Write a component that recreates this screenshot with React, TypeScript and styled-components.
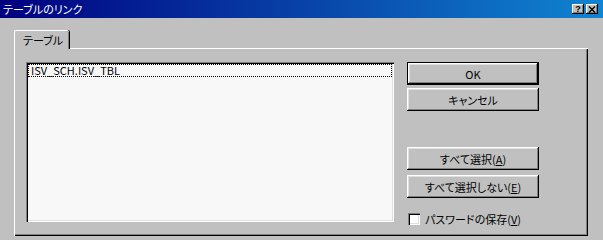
import styled, { createGlobalStyle } from "styled-components";

const GlobalStyle = createGlobalStyle`
  html, body {
    margin: 0;
    padding: 0;
    background: #c0c0c0;
  }
  body {
    font-family: "Noto Sans CJK JP", "Noto Sans", sans-serif;
  }
`;

const Window = styled.div`
  width: 603px;
  height: 240px;
  background: #c0c0c0;
  display: flex;
  flex-direction: column;
  overflow: hidden;
  font-size: 11px;
  font-weight: normal;
  color: #000;
  font-feature-settings: "palt";
`;

const TitleBar = styled.div`
  height: 18px;
  flex: none;
  display: flex;
  align-items: center;
  justify-content: space-between;
  padding: 0 5px 0 3px;
  background: linear-gradient(to right, #000080, #1084d0);
  color: #fff;
`;

const TitleText = styled.span`
  line-height: 18px;
  font-size: 11px;
`;

const CaptionButtons = styled.div`
  display: flex;
  gap: 2px;
`;

const CaptionButton = styled.div`
  width: 12px;
  height: 10px;
  background: #c0c0c0;
  box-shadow: inset -1px -1px #000, inset 1px 1px #fff, inset -2px -2px #808080;
  display: flex;
  align-items: center;
  justify-content: center;
  color: #000;
  font-family: "Liberation Sans", sans-serif;
  font-weight: bold;
  font-size: 9px;
  line-height: 10px;
`;

const Body = styled.div`
  flex: 1;
  display: flex;
  flex-direction: column;
  padding: 12px 15px 0 14px;
`;

const TabStrip = styled.div`
  display: flex;
  height: 18px;
  flex: none;
`;

const Tab = styled.div`
  position: relative;
  z-index: 1;
  width: 55px;
  height: 19px;
  box-sizing: border-box;
  padding: 2px 0 0 8px;
  background: #c0c0c0;
  border-top: 1px solid #fff;
  border-left: 1px solid #fff;
  border-top-left-radius: 2px;
  border-top-right-radius: 2px;
  box-shadow: inset -1px 0 #808080, 1px 0 #000;
  line-height: 15px;
`;

const Panel = styled.div`
  width: 574px;
  height: 188px;
  flex: none;
  box-sizing: border-box;
  padding: 14px 0 0 12px;
  display: flex;
  gap: 13px;
  box-shadow: inset 1px 1px #fff, inset -1px -1px #000, inset -2px -2px #808080;
`;

const ListBox = styled.div`
  width: 368px;
  height: 160px;
  box-sizing: border-box;
  padding: 1px 2px;
  background: #f8f8f8;
  box-shadow: inset 1px 1px #808080, inset 2px 2px #000, inset -1px -1px #fff,
    inset -2px -2px #dfdfdf;
`;

const ListItem = styled.div`
  height: 13px;
  margin: 1px 0 0;
  padding-left: 3px;
  outline: 1px dotted #000;
  outline-offset: -1px;
  line-height: 13px;
`;

const ButtonColumn = styled.div`
  width: 132px;
  display: flex;
  flex-direction: column;
`;

const Button = styled.div<{ $default?: boolean; $gap?: number }>`
  height: 23px;
  box-sizing: border-box;
  margin-top: ${(p) => p.$gap ?? 0}px;
  background: #c0c0c0;
  display: flex;
  align-items: center;
  justify-content: center;
  line-height: 14px;
  border: ${(p) => (p.$default ? "1px solid #000" : "none")};
  box-shadow: inset -1px -1px #000, inset 1px 1px #fff, inset -2px -2px #808080,
    inset 2px 2px #dfdfdf;
`;

const Mnemonic = styled.span`
  text-decoration: underline;
`;

const CheckRow = styled.label`
  display: flex;
  align-items: center;
  gap: 5px;
  margin-top: 14px;
  padding-left: 1px;
  line-height: 14px;
`;

const CheckBox = styled.span`
  width: 12px;
  height: 12px;
  background: #fff;
  box-shadow: inset 1px 1px #808080, inset 2px 2px #000, inset -1px -1px #fff,
    inset -2px -2px #dfdfdf;
`;

const App = () => {
  return (
    <Window>
      <GlobalStyle />
      <TitleBar>
        <TitleText>テーブルのリンク</TitleText>
        <CaptionButtons>
          <CaptionButton>?</CaptionButton>
          <CaptionButton>
            <svg width="8" height="7" viewBox="0 0 8 7">
              <path d="M1 0.5 L7 6.5 M7 0.5 L1 6.5" stroke="#000" strokeWidth="1.4" />
            </svg>
          </CaptionButton>
        </CaptionButtons>
      </TitleBar>
      <Body>
        <TabStrip>
          <Tab>テーブル</Tab>
        </TabStrip>
        <Panel>
          <ListBox>
            <ListItem>ISV_SCH.ISV_TBL</ListItem>
          </ListBox>
          <ButtonColumn>
            <Button $default>OK</Button>
            <Button $gap={3}>キャンセル</Button>
            <Button $gap={36}>
              すべて選択(<Mnemonic>A</Mnemonic>)
            </Button>
            <Button $gap={5}>
              すべて選択しない(<Mnemonic>E</Mnemonic>)
            </Button>
            <CheckRow>
              <CheckBox />
              <span>
                パスワードの保存(<Mnemonic>V</Mnemonic>)
              </span>
            </CheckRow>
          </ButtonColumn>
        </Panel>
      </Body>
    </Window>
  );
};

export default App;
